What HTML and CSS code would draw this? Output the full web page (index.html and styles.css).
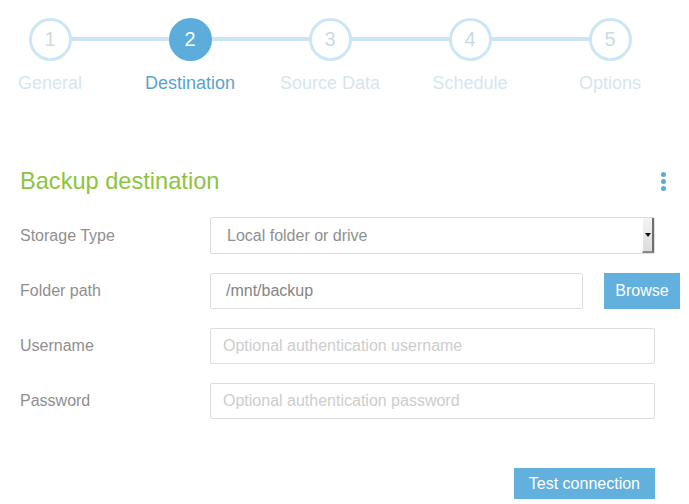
FILE: index.html
```html
<!DOCTYPE html>
<html lang="en">
<head>
  <meta charset="UTF-8" />
  <meta name="viewport" content="width=device-width, initial-scale=1.0" />
  <title>Add backup - Destination</title>
  <link rel="stylesheet" href="styles.css">
</head>
<body>
  <div class="wizard">
    <div class="step"><span class="dot">1</span><span class="name">General</span></div>
    <div class="step active"><span class="dot">2</span><span class="name">Destination</span></div>
    <div class="step"><span class="dot">3</span><span class="name">Source Data</span></div>
    <div class="step"><span class="dot">4</span><span class="name">Schedule</span></div>
    <div class="step"><span class="dot">5</span><span class="name">Options</span></div>
  </div>

  <div class="section">
    <div class="section-head">
      <h2>Backup destination</h2>
      <span class="kebab"><i></i><i></i><i></i></span>
    </div>

    <div class="row">
      <label>Storage Type</label>
      <div class="select">
        <span>Local folder or drive</span>
        <span class="arrow"></span>
      </div>
    </div>

    <div class="row">
      <label>Folder path</label>
      <div class="field-inline">
        <input type="text" class="path" value="/mnt/backup" />
        <button type="button" class="btn browse">Browse</button>
      </div>
    </div>

    <div class="row">
      <label>Username</label>
      <input type="text" placeholder="Optional authentication username" />
    </div>

    <div class="row">
      <label>Password</label>
      <input type="password" placeholder="Optional authentication password" />
    </div>

    <div class="actions">
      <button type="button" class="btn">Test connection</button>
    </div>
  </div>
</body>
</html>
```

FILE: styles.css
```css
body {
  font-family: "Liberation Sans", Arial, sans-serif;
  background: white;
  margin: 0;
  color: #8f8f8f;
}

/* wizard steps */
.wizard {
  display: flex;
  gap: 40px;
  padding-top: 18px;
}
.step {
  position: relative;
  width: 100px;
  display: flex;
  flex-direction: column;
  align-items: center;
}
.step + .step::before {
  content: "";
  position: absolute;
  top: 19px;
  left: -90px;
  width: 140px;
  height: 4px;
  background: #cbe5f5;
}
.dot {
  position: relative;
  z-index: 1;
  box-sizing: border-box;
  width: 43px;
  height: 43px;
  border: 3px solid #cde6f5;
  border-radius: 50%;
  background: white;
  color: #cadbe6;
  font-size: 20px;
  line-height: 37px;
  text-align: center;
}
.name {
  margin-top: 11px;
  font-size: 18px;
  line-height: 22px;
  white-space: nowrap;
  color: #d6e5ef;
}
.step.active .dot {
  background: #5cacdc;
  border-color: #5cacdc;
  color: white;
}
.step.active .name {
  color: #5aa3cd;
}

/* form */
.section {
  margin-top: 72px;
  padding: 0 34px 0 20px;
}
.section-head {
  display: flex;
  justify-content: space-between;
  align-items: center;
  margin-right: -12px;
}
h2 {
  margin: 0;
  font-size: 23.6px;
  font-weight: normal;
  line-height: 30px;
  color: #8cc43d;
}
.kebab {
  display: flex;
  flex-direction: column;
  gap: 2px;
  padding: 0 1px;
}
.kebab i {
  width: 5px;
  height: 5px;
  border-radius: 50%;
  background: #5ea9d8;
}
.row {
  display: grid;
  grid-template-columns: 190px 1fr;
  align-items: center;
  margin-top: 19px;
}
.section-head + .row {
  margin-top: 21px;
}
label {
  font-size: 16px;
  color: #8f8f8f;
}
input, .select {
  box-sizing: border-box;
  height: 36px;
  width: 100%;
  border: 1px solid #ddd;
  border-radius: 2px;
  padding: 0 12px;
  font-family: inherit;
  font-size: 16px;
  color: #858585;
  outline: none;
}
input::placeholder {
  color: #cdcdcd;
}
.select {
  height: 37px;
  display: flex;
  align-items: center;
  justify-content: space-between;
  padding: 0 0 0 16px;
  color: #8f8f8f;
}
.arrow {
  position: relative;
  box-sizing: border-box;
  width: 12px;
  height: 100%;
  background: linear-gradient(#f4f4f4, #dcdcdc);
  border-right: 2px solid #6f6f6f;
  border-bottom: 2px solid #8a8a8a;
  border-left: 1px solid #fff;
}
.arrow::after {
  content: "";
  position: absolute;
  left: 2px;
  top: 15px;
  border-left: 3px solid transparent;
  border-right: 3px solid transparent;
  border-top: 4px solid #111;
}
.field-inline {
  display: flex;
  gap: 21px;
}
.field-inline .path {
  flex: none;
  width: 373px;
  padding-left: 15px;
}
.btn {
  border: none;
  background: #62b0de;
  color: white;
  font-family: inherit;
  font-size: 16px;
  padding: 0 15px;
  height: 31px;
}
.browse {
  flex: none;
  width: 76px;
  height: 36px;
  padding: 0;
}
.actions {
  display: flex;
  justify-content: flex-end;
  margin-top: 49px;
}
```
